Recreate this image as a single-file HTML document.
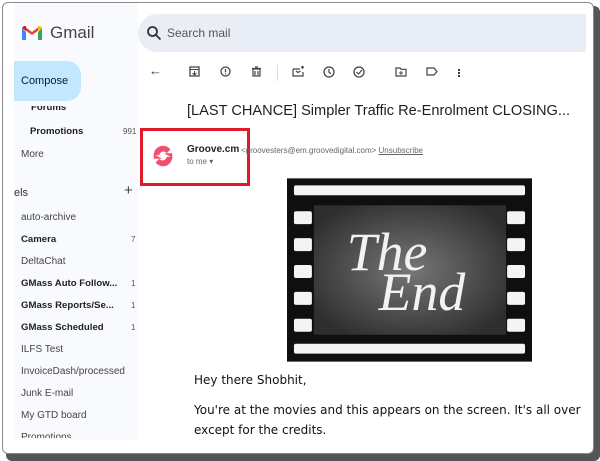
<!DOCTYPE html>
<html><head><meta charset="utf-8"><style>
*{margin:0;padding:0;box-sizing:border-box}
body{width:600px;height:461px;background:#fff;position:relative;overflow:hidden;font-family:"Liberation Sans",Arial,sans-serif}
.shadow{position:absolute;left:6px;top:6px;width:594px;height:455px;background:#555;border-radius:6px}
.frame{position:absolute;left:2px;top:2px;width:592px;height:452px;background:#fff;border:1px solid #8a8a8a;border-radius:6px}
.c{position:absolute;left:0;top:0;width:600px;height:461px;clip-path:inset(3px 7px 8px 3px round 5px)}
.side{position:absolute;left:14px;top:0;width:124px;height:440px;background:#f8fafd}
.main{position:absolute;left:138px;top:52px;width:452px;height:388px;background:#fff;border-radius:10px 0 0 0}
.t{position:absolute;white-space:nowrap;color:#202124}
.lab{font-size:10px;color:#444}
.b{font-weight:bold;color:#202124;font-size:9.6px}
.cnt{position:absolute;left:131px;font-size:8px;color:#555}
.ic{position:absolute;top:66px}
</style></head><body>
<div class="shadow"></div>
<div class="frame"></div>
<div class="c">
<div class="side"></div>
<div style="position:absolute;left:138px;top:14px;width:448px;height:38px;background:#e9eef6;border-radius:19px 0 0 19px"></div>
<div class="main"></div>
<svg style="position:absolute;left:21px;top:25px" width="22" height="16" viewBox="0 0 22 16">
<path d="M1 3v12h4V7z" fill="#4285f4"/><path d="M17 7v8h4V3z" fill="#34a853"/>
<path d="M1 3l10 7 10-7-2-2-8 6-8-6z" fill="#ea4335"/><path d="M17 1h2l2 2-4 3z" fill="#fbbc04"/><path d="M1 3l2-2h2v5z" fill="#c5221f"/>
</svg>
<div class="t" style="left:50px;top:23px;font-size:17px;color:#444">Gmail</div>
<svg style="position:absolute;left:146px;top:25px" width="16" height="16" viewBox="0 0 16 16"><circle cx="6.5" cy="6.5" r="4.5" fill="none" stroke="#333" stroke-width="1.8"/><path d="M10 10l4.5 4.5" stroke="#333" stroke-width="1.8"/></svg>
<div class="t" style="left:167px;top:26px;font-size:12px;color:#555">Search mail</div>
<div style="position:absolute;left:14px;top:61px;width:67px;height:40px;background:#c2e7ff;border-radius:0 14px 14px 0"></div>
<div class="t" style="left:21px;top:75px;font-size:11px;color:#001d35">Compose</div>
<div class="t b" style="left:31px;top:106px;height:8px;overflow:hidden;line-height:4px">Forums</div>
<div class="t b" style="left:30px;top:126px">Promotions</div>
<div class="t" style="left:123px;top:127px;font-size:8px;color:#555">991</div>
<div class="t lab" style="left:21px;top:149px">More</div>
<div class="t" style="left:14px;top:187px;font-size:11px;color:#333">els</div>
<div class="t" style="left:124px;top:182px;font-size:15px;color:#444">+</div>
<div class="t lab" style="left:21px;top:212px">auto-archive</div>
<div class="t lab b" style="left:21px;top:234px">Camera</div><div class="t cnt" style="top:235px">7</div>
<div class="t lab" style="left:21px;top:256px">DeltaChat</div>
<div class="t lab b" style="left:21px;top:278px">GMass Auto Follow...</div><div class="t cnt" style="top:279px">1</div>
<div class="t lab b" style="left:21px;top:300px">GMass Reports/Se...</div><div class="t cnt" style="top:301px">1</div>
<div class="t lab b" style="left:21px;top:322px">GMass Scheduled</div><div class="t cnt" style="top:323px">1</div>
<div class="t lab" style="left:21px;top:344px">ILFS Test</div>
<div class="t lab" style="left:21px;top:366px">InvoiceDash/processed</div>
<div class="t lab" style="left:21px;top:388px">Junk E-mail</div>
<div class="t lab" style="left:21px;top:410px">My GTD board</div>
<div class="t lab" style="left:21px;top:432px;height:6px;overflow:hidden">Promotions</div>
<div class="t" style="left:149px;top:63px;font-size:13px;color:#444">←</div>
<svg class="ic" style="left:189px" width="11" height="11"><rect x="1" y="1" width="9" height="9" fill="none" stroke="#444" stroke-width="1.3"/><path d="M1 3.5h9M5.5 5v4M3.5 7l2 2 2-2" stroke="#444" fill="none"/></svg>
<svg class="ic" style="left:220px" width="11" height="11"><circle cx="5.5" cy="5.5" r="4.5" fill="none" stroke="#444" stroke-width="1.3"/><path d="M5.5 3v3.2M5.5 7.3v1" stroke="#444" stroke-width="1.3"/></svg>
<svg class="ic" style="left:251px" width="11" height="11"><path d="M2 3h7v7H2zM1 2.5h9M4 1h3M4 5v4M7 5v4" fill="none" stroke="#444" stroke-width="1.2"/></svg>
<div style="position:absolute;left:277px;top:65px;width:1px;height:16px;background:#ddd"></div>
<svg class="ic" style="left:292px" width="12" height="11"><path d="M1 3h7M1 3v7h10V6M4 5l2 1.5L8.5 5M9 1h3M10.5 0v3" fill="none" stroke="#444" stroke-width="1.2"/></svg>
<svg class="ic" style="left:323px" width="12" height="12"><circle cx="6" cy="6" r="5" fill="none" stroke="#444" stroke-width="1.3"/><path d="M6 3v3.3l2 1.3" fill="none" stroke="#444" stroke-width="1.2"/></svg>
<svg class="ic" style="left:353px" width="13" height="12"><circle cx="6" cy="6" r="5" fill="none" stroke="#444" stroke-width="1.3"/><path d="M3.5 6l2 2 3.5-4" fill="none" stroke="#444" stroke-width="1.2"/></svg>
<svg class="ic" style="left:395px" width="12" height="11"><path d="M1 2h4l1 1.3h5V10H1z" fill="none" stroke="#444" stroke-width="1.2"/><path d="M6 5v4M4 7h4" stroke="#444"/></svg>
<svg class="ic" style="left:426px" width="12" height="11"><path d="M1 2h7l3 3.5L8 9H1z" fill="none" stroke="#444" stroke-width="1.2"/></svg>
<div style="position:absolute;left:458px;top:69px;width:2px;height:2px;background:#444;box-shadow:0 3px 0 #444,0 6px 0 #444"></div>
<div class="t" style="left:187px;top:103px;font-size:14.6px;color:#1f1f1f">[LAST CHANCE] Simpler Traffic Re-Enrolment CLOSING...</div>
<div style="position:absolute;left:140px;top:128px;width:110px;height:58px;border:3px solid #e01b2a"></div>
<svg style="position:absolute;left:150px;top:143px" width="26" height="26" viewBox="0 0 28 28"><path d="M22 7A10 10 0 0 0 4 13h6a4.5 4.5 0 0 1 8-2z" fill="#f0506e"/><path d="M6 21a10 10 0 0 0 18-6h-6a4.5 4.5 0 0 1-8 2z" fill="#f0506e"/><path d="M15 11h9v5z" fill="#f0506e"/><path d="M13 17H4v-5z" fill="#f0506e"/></svg>
<div class="t b" style="left:187px;top:144px;font-size:10px">Groove.cm</div>
<div class="t" style="left:241px;top:146px;font-size:8px;color:#666">&lt;groovesters@em.groovedigital.com&gt; <u>Unsubscribe</u></div>
<div class="t" style="left:187px;top:157px;font-size:8px;color:#666">to me ▾</div>
<svg style="position:absolute;left:287px;top:178px" width="245" height="184" viewBox="0 0 246 184">
<defs><radialGradient id="g" cx="50%" cy="50%" r="60%"><stop offset="0" stop-color="#777"/><stop offset="1" stop-color="#2e2e2e"/></radialGradient></defs>
<rect width="246" height="184" fill="#0f0f0f"/>
<rect x="7" y="7" width="232" height="10" rx="2" fill="#f4f4f4"/>
<rect x="7" y="166" width="232" height="10" rx="2" fill="#f4f4f4"/>
<rect x="27" y="27" width="193" height="130" fill="url(#g)"/>
<g fill="#f4f4f4"><rect x="7" y="33" width="18" height="13" rx="2"/><rect x="7" y="60" width="18" height="13" rx="2"/><rect x="7" y="87" width="18" height="13" rx="2"/><rect x="7" y="114" width="18" height="13" rx="2"/><rect x="7" y="141" width="18" height="13" rx="2"/>
<rect x="221" y="33" width="18" height="13" rx="2"/><rect x="221" y="60" width="18" height="13" rx="2"/><rect x="221" y="87" width="18" height="13" rx="2"/><rect x="221" y="114" width="18" height="13" rx="2"/><rect x="221" y="141" width="18" height="13" rx="2"/></g>
<text x="60" y="92" font-family="Liberation Serif,serif" font-style="italic" font-size="54" fill="#f2f2f2">The</text>
<text x="92" y="132" font-family="Liberation Serif,serif" font-style="italic" font-size="54" fill="#f2f2f2">End</text>
</svg>
<div class="t" style="left:194px;top:373px;font-size:12px;font-family:'DejaVu Sans',sans-serif;color:#111">Hey there Shobhit,</div>
<div class="t" style="left:194px;top:400px;font-size:12px;font-family:'DejaVu Sans',sans-serif;color:#111;line-height:20px">You're at the movies and this appears on the screen. It's all over<br>except for the credits.</div>
</div>
</body></html>
